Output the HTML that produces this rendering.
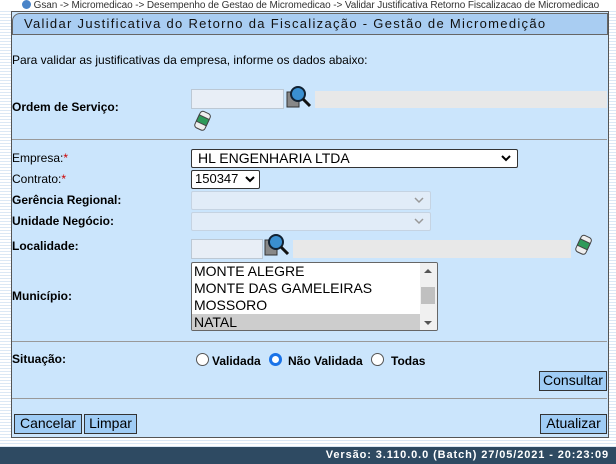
<!DOCTYPE html>
<html><head><meta charset="utf-8"><style>
*{box-sizing:border-box}
body{margin:0;width:616px;height:464px;overflow:hidden;font-family:"Liberation Sans",Arial,sans-serif;font-size:12px;color:#000;
background:repeating-linear-gradient(#fff 0 2px,#dbe8f5 2px 3px);position:relative}
.a{position:absolute}
#bc{left:0;top:0;width:616px;height:11px;background:#fff;font-size:10px;color:#333;line-height:11px;white-space:nowrap;letter-spacing:-0.1px}
#panel{left:11px;top:11px;width:598px;height:427px;background:#cbe5fc;border:1px solid #555}
#title{left:12px;top:13px;width:596px;height:22px;background:#a9cdf2;border:1px solid #666;border-top-left-radius:8px;font-size:13px;letter-spacing:1.3px;color:#111;line-height:20px;padding-left:11px}
.lbl{font-weight:bold;font-size:12px}
.inp{background:#e8eef6;border:1px solid #bcc8d4}
.ro{background:#e8e8e8}
.sel{background:#fff;border:1px solid #333;border-radius:2px;font-size:14px;line-height:16px;padding-left:6px}
.dis{background:#e1ecf8;border:1px solid #c5d3e2;border-radius:2px}
.hr{left:12px;width:595px;height:1px;background:#999}
.btn{background:#9fccf5;border:1px solid #333;font-size:14px;line-height:17px;text-align:center;height:20px}
.rad{width:13px;height:13px;border-radius:50%;border:1px solid #555;background:#fff}
#foot{left:0;top:447px;width:616px;height:17px;background:#2e4a62;color:#fff;font-weight:bold;font-size:11px;letter-spacing:0.9px;text-align:right;padding-right:7px;line-height:17px}
.chev{position:absolute;right:6px;top:3px}
</style></head><body>
<div class="a" id="bc"><span style="display:inline-block;width:9px;height:9px;border-radius:50%;background:#4a84c8;margin-left:22px;vertical-align:-1px"></span> Gsan -&gt; Micromedicao -&gt; Desempenho de Gestao de Micromedicao -&gt; Validar Justificativa Retorno Fiscalizacao de Micromedicao</div>
<div class="a" id="panel"></div>
<div class="a" id="title">Validar Justificativa do Retorno da Fiscalização - Gestão de Micromedição</div>
<div class="a" style="left:12px;top:53px">Para validar as justificativas da empresa, informe os dados abaixo:</div>

<div class="a lbl" style="left:12px;top:100px">Ordem de Serviço:</div>
<div class="a inp" style="left:191px;top:89px;width:93px;height:20px"></div>
<svg class="a" style="left:286px;top:85px" width="26" height="24"><rect x="1" y="7" width="12" height="15" fill="#888" stroke="#333"/><circle cx="12" cy="9" r="7" fill="#3a8fd0" stroke="#123" stroke-width="2"/><line x1="17" y1="14" x2="24" y2="21" stroke="#111" stroke-width="3"/></svg>
<div class="a ro" style="left:315px;top:91px;width:292px;height:17px"></div>
<svg class="a" style="left:193px;top:110px" width="20" height="22"><g transform="rotate(25 10 11)"><rect x="4" y="2" width="11" height="18" rx="3" fill="#eee" stroke="#444"/><rect x="4" y="7" width="11" height="7" fill="#2f9a5a" stroke="#444"/></g></svg>
<div class="a hr" style="top:139px"></div>

<div class="a lbl" style="left:12px;top:151px;font-weight:normal">Empresa:<span style="color:#c00">*</span></div>
<div class="a sel" style="left:191px;top:149px;width:327px;height:19px">HL ENGENHARIA LTDA<svg class="chev" width="10" height="10"><path d="M1 3l4 4 4-4" fill="none" stroke="#000" stroke-width="2"/></svg></div>
<div class="a lbl" style="left:12px;top:172px;font-weight:normal">Contrato:<span style="color:#c00">*</span></div>
<div class="a sel" style="left:191px;top:170px;width:69px;height:19px;padding-left:3px;font-size:13px">150347<svg class="chev" style="right:4px" width="10" height="10"><path d="M1 3l4 4 4-4" fill="none" stroke="#000" stroke-width="2"/></svg></div>
<div class="a lbl" style="left:12px;top:193px">Gerência Regional:</div>
<div class="a dis" style="left:191px;top:191px;width:240px;height:19px"><svg class="chev" width="10" height="10"><path d="M1 3l4 4 4-4" fill="none" stroke="#999" stroke-width="1.5"/></svg></div>
<div class="a lbl" style="left:12px;top:214px">Unidade Negócio:</div>
<div class="a dis" style="left:191px;top:212px;width:240px;height:19px"><svg class="chev" width="10" height="10"><path d="M1 3l4 4 4-4" fill="none" stroke="#999" stroke-width="1.5"/></svg></div>

<div class="a lbl" style="left:12px;top:239px">Localidade:</div>
<div class="a inp" style="left:191px;top:239px;width:72px;height:20px"></div>
<svg class="a" style="left:264px;top:233px" width="26" height="24"><rect x="1" y="7" width="12" height="15" fill="#888" stroke="#333"/><circle cx="12" cy="9" r="7" fill="#3a8fd0" stroke="#123" stroke-width="2"/><line x1="17" y1="14" x2="24" y2="21" stroke="#111" stroke-width="3"/></svg>
<div class="a ro" style="left:293px;top:240px;width:278px;height:18px"></div>
<svg class="a" style="left:574px;top:234px" width="20" height="22"><g transform="rotate(25 10 11)"><rect x="4" y="2" width="11" height="18" rx="3" fill="#eee" stroke="#444"/><rect x="4" y="7" width="11" height="7" fill="#2f9a5a" stroke="#444"/></g></svg>

<div class="a lbl" style="left:12px;top:289px">Município:</div>
<div class="a" style="left:191px;top:262px;width:247px;height:69px;background:#fff;border:1px solid #666;border-radius:2px;font-size:14px;line-height:17px;overflow:hidden">
<div style="padding-left:2px">MONTE ALEGRE</div>
<div style="padding-left:2px">MONTE DAS GAMELEIRAS</div>
<div style="padding-left:2px">MOSSORO</div>
<div style="padding-left:2px;background:#cdcdcd;width:228px">NATAL</div>
<div class="a" style="left:228px;top:0;width:17px;height:67px;background:#f0f0f0"></div>
<div class="a" style="left:229px;top:24px;width:14px;height:17px;background:#c0c0c0"></div>
<svg class="a" style="left:231px;top:4px" width="10" height="60"><path d="M1 6l4-4 4 4z M1 54l4 4 4-4z" fill="#555"/></svg>
</div>
<div class="a hr" style="top:341px"></div>

<div class="a lbl" style="left:12px;top:352px">Situação:</div>
<div class="a rad" style="left:196px;top:353px"></div>
<div class="a lbl" style="left:212px;top:354px">Validada</div>
<div class="a rad" style="left:269px;top:353px;border:3.5px solid #1a73e8"></div>
<div class="a lbl" style="left:288px;top:354px">Não Validada</div>
<div class="a rad" style="left:371px;top:353px"></div>
<div class="a lbl" style="left:391px;top:354px">Todas</div>
<div class="a btn" style="left:539px;top:371px;width:68px">Consultar</div>
<div class="a hr" style="top:398px"></div>

<div class="a btn" style="left:14px;top:414px;width:68px">Cancelar</div>
<div class="a btn" style="left:84px;top:414px;width:53px">Limpar</div>
<div class="a btn" style="left:540px;top:414px;width:67px">Atualizar</div>

<div class="a" id="foot">Versão: 3.110.0.0 (Batch) 27/05/2021 - 20:23:09</div>
</body></html>
